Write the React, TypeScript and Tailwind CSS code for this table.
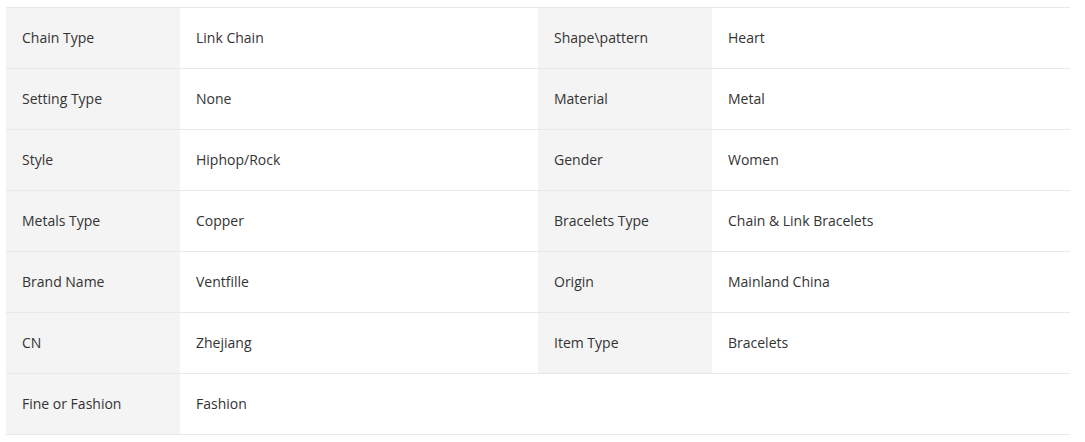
const rows: [string, string, string?, string?][] = [
  ["Chain Type", "Link Chain", "Shape\\pattern", "Heart"],
  ["Setting Type", "None", "Material", "Metal"],
  ["Style", "Hiphop/Rock", "Gender", "Women"],
  ["Metals Type", "Copper", "Bracelets Type", "Chain & Link Bracelets"],
  ["Brand Name", "Ventfille", "Origin", "Mainland China"],
  ["CN", "Zhejiang", "Item Type", "Bracelets"],
  ["Fine or Fashion", "Fashion"],
];

export default function App() {
  return (
    <div className="w-[1085px] h-[442px] bg-white pt-[7px] pl-[6px]" style={{ fontFamily: '"Open Sans", sans-serif' }}>
      <div className="w-[1064px] border-t border-[#e8e8e8] text-[14px] text-[#333]">
        {rows.map((r, i) => (
          <div key={i} className="grid grid-cols-[174px_358px_174px_358px] h-[61px] border-b border-[#e8e8e8]">
            <div className="bg-[#f4f4f4] px-4 pb-[2px] flex items-center">{r[0]}</div>
            <div className="px-4 pb-[2px] flex items-center">{r[1]}</div>
            {r[2] !== undefined ? (
              <>
                <div className="bg-[#f4f4f4] px-4 pb-[2px] flex items-center">{r[2]}</div>
                <div className="px-4 pb-[2px] flex items-center">{r[3]}</div>
              </>
            ) : (
              <>
                <div />
                <div />
              </>
            )}
          </div>
        ))}
      </div>
    </div>
  );
}
